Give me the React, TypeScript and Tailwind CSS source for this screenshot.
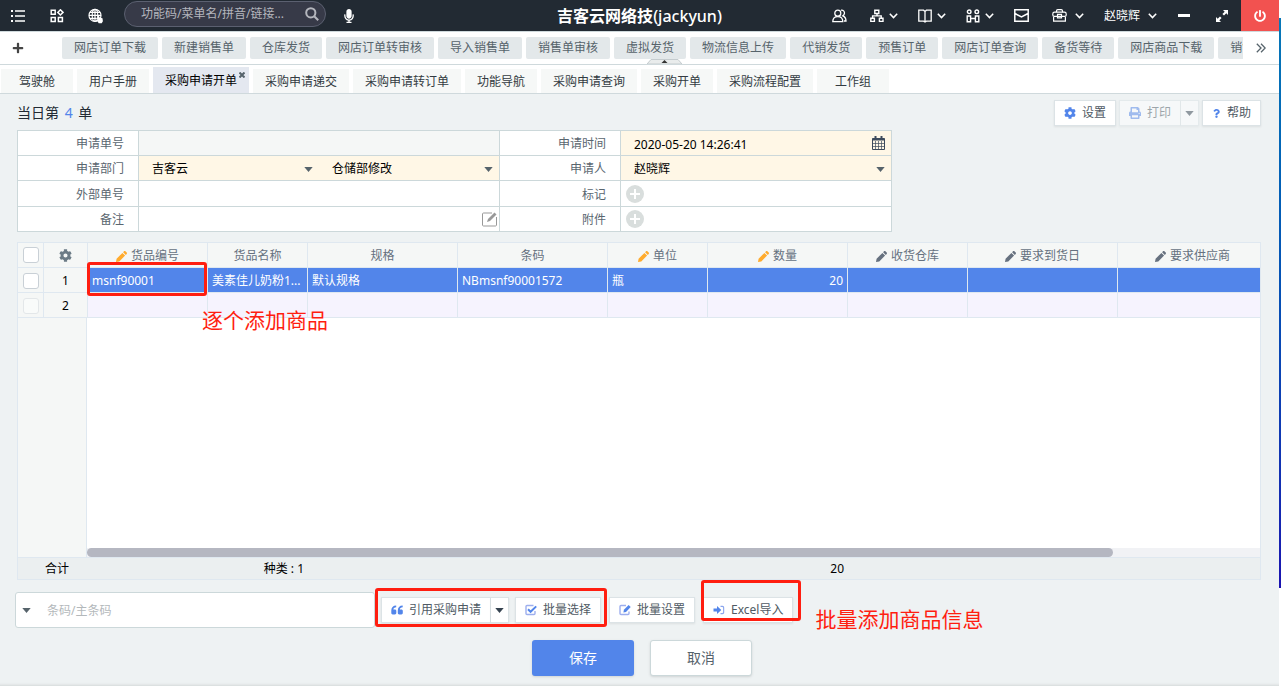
import React, { useState } from 'react';
import { FaCog, FaPlus, FaPrint, FaQuestion, FaPowerOff, FaMicrophone } from 'react-icons/fa';

type IconProps = { className?: string };

const Chevron = () => (
  <svg className="w-[9px] h-[6px]" viewBox="0 0 9 6" fill="none" stroke="currentColor" strokeWidth={1.5}>
    <path d="M0.8 0.8L4.5 4.6L8.2 0.8" />
  </svg>
);

const Caret = ({ className = '' }: IconProps) => (
  <svg className={`w-[9px] h-[5px] ${className}`} viewBox="0 0 9 5" fill="currentColor">
    <path d="M0.3 0H8.7L4.5 5z" />
  </svg>
);

const PencilIcon = ({ className = '' }: IconProps) => (
  <svg className={`w-[11px] h-[11px] ${className}`} viewBox="0 0 11 11" fill="currentColor">
    <path d="M0 11l.6-3.300L6.400 1.900l2.700 2.700-5.800 5.800zM7.100 1.200L8 .3c.4-.4 1-.4 1.400 0l1.300 1.300c.4.4.4 1 0 1.400l-.9.900z" />
  </svg>
);

const ListIcon = () => (
  <svg className="w-4 h-4" viewBox="0 0 16 16" fill="currentColor">
    <path d="M1 2h2v2H1zM1 7h2v2H1zM1 12h2v2H1zM5 2.2h10v1.5H5zM5 7.2h10v1.5H5zM5 12.2h10v1.5H5z" />
  </svg>
);

const AppsIcon = () => (
  <svg className="w-[14px] h-[14px]" viewBox="0 0 14 14" fill="none" stroke="currentColor" strokeWidth={1.5}>
    <path d="M1.2 1.2h4v4h-4zM1.2 8.4h4v4h-4zM8.4 8.4h4v4h-4zM10.4 0.8l2.6 2.6-2.6 2.6-2.6-2.6z" />
  </svg>
);

const GlobeIcon = () => (
  <svg className="w-4 h-4" viewBox="0 0 16 16" fill="none" stroke="currentColor" strokeWidth={1.2}>
    <circle cx="7" cy="7.4" r="6" />
    <ellipse cx="7" cy="7.4" rx="2.8" ry="6" />
    <path d="M7 1.4v12M1 7.4h12M1.8 4.4h10.4M1.8 10.4h7" />
    <path d="M9.5 8l1.2-.6 1 2 2.8.8.4 3-1.2 2h-3l-2-3.2 1.4-.4z" fill="currentColor" stroke="none" />
  </svg>
);

const SearchIcon = () => (
  <svg className="w-[14px] h-[14px]" viewBox="0 0 14 14" fill="none" stroke="currentColor" strokeWidth={2}>
    <circle cx="5.8" cy="5.8" r="4.6" />
    <path d="M9.2 9.2l4 4" />
  </svg>
);

const UsersIcon = () => (
  <svg className="w-[15px] h-[14px]" viewBox="0 0 15 14" fill="none" stroke="currentColor" strokeWidth={1.3}>
    <circle cx="5.8" cy="4.2" r="3" />
    <path d="M0.8 12.6c0-3 2-5 5-5s5 2 5 5zM9 1.2c2.6-.2 3.8 1.6 3.4 3.4-.2 1-.9 1.7-1.6 2.2 2 .7 3.2 2.6 3.2 5.2h-2" />
  </svg>
);

const OrgIcon = () => (
  <svg className="w-[14px] h-[14px]" viewBox="0 0 14 14" fill="none" stroke="currentColor" strokeWidth={1.4}>
    <path d="M4.8 1.3h4v3.2h-4zM0.8 9.2h3.6v3.2H0.8zM9.4 9.2H13v3.2H9.4zM7 4.5v2.4M2.6 9.2V6.9h8.6v2.3" />
  </svg>
);

const BookIcon = () => (
  <svg className="w-[14px] h-[14px]" viewBox="0 0 14 14" fill="none" stroke="currentColor" strokeWidth={1.3}>
    <path d="M7 2.4L5.600 1.200H0.800v11h4.800L7 13l1.400-.8h4.800v-11H8.400zM7 2.400V13" />
  </svg>
);

const TeamIcon = () => (
  <svg className="w-[14px] h-[14px]" viewBox="0 0 14 14" fill="none" stroke="currentColor" strokeWidth={1.4}>
    <circle cx="3.2" cy="2.8" r="1.8" />
    <circle cx="10.8" cy="2.8" r="1.8" />
    <path d="M1.200 12.800V7h3.400v5.800zM9.400 12.800V7h3.400v5.800zM4.600 9.500h4.800" />
  </svg>
);

const MailIcon = () => (
  <svg className="w-[15px] h-[13px]" viewBox="0 0 15 13" fill="none" stroke="currentColor" strokeWidth={1.5}>
    <path d="M0.8 0.8h13.4v11.400H0.8zM1 4.500l6.500 3.500L14 4.500" />
  </svg>
);

const BriefcaseIcon = () => (
  <svg className="w-[15px] h-[13px]" viewBox="0 0 15 13" fill="none" stroke="currentColor" strokeWidth={1.2}>
    <path d="M4.500 3.200V2c0-.8.500-1.300 1.300-1.300h3.400c.8 0 1.300.5 1.300 1.300v1.200" />
    <path d="M2.500 3.200h10c1 0 1.700.7 1.700 1.700v1c0 .8-.6 1.400-1.400 1.400H2.200C1.400 7.300.8 6.700.8 5.900v-1c0-1 .7-1.700 1.700-1.700zM1.600 7.300v4.900h11.800V7.300M5.500 5.300h4v3.500h-4z" />
  </svg>
);

const ExpandIcon = () => (
  <svg className="w-3 h-3" viewBox="0 0 12 12" fill="currentColor">
    <path d="M7 0h5v5l-1.700-1.700L8 5.600 6.400 4l2.300-2.300zM5 12H0V7l1.700 1.700L4 6.400 5.600 8l-2.300 2.300z" />
  </svg>
);

const QuoteIcon = () => (
  <svg className="w-3 h-3" viewBox="0 0 12 12" fill="#5285ea">
    <path d="M5.200 1.500C2 1.500.3 3.600.3 6.500V9c0 .8.600 1.400 1.400 1.400h2.200c.8 0 1.400-.6 1.400-1.400V7c0-.8-.6-1.400-1.400-1.400H2.400c0-1.400 1-2.300 2.800-2.300zM11.700 1.500c-3.200 0-4.900 2.100-4.900 5V9c0 .8.600 1.400 1.400 1.400h2.200c.8 0 1.400-.6 1.400-1.400V7c0-.8-.6-1.400-1.400-1.400H8.900c0-1.400 1-2.300 2.800-2.300z" />
  </svg>
);

const CheckIcon = () => (
  <svg className="w-3 h-3" viewBox="0 0 12 12" fill="none">
    <path d="M8.500 1.500h-6.500c-.6 0-1 .4-1 1v7c0 .6.400 1 1 1h7c.6 0 1-.4 1-1V7" stroke="#9daeee" strokeWidth={1.400} />
    <path d="M3 5.200l2.600 2.600L11.200 2.400" stroke="#5285ea" strokeWidth={2} />
  </svg>
);

const EditIcon = () => (
  <svg className="w-3 h-3" viewBox="0 0 12 12" fill="none">
    <path d="M7 1.500H2c-.6 0-1 .4-1 1v7c0 .6.400 1 1 1h7c.6 0 1-.4 1-1V7.500" stroke="#9daeee" strokeWidth={1.400} />
    <path d="M4.400 8.400l.5-2.600L9.600 1l2.100 2L7 7.900z" fill="#5285ea" />
  </svg>
);

const ImportIcon = () => (
  <svg className="w-3 h-3" viewBox="0 0 12 12" fill="#5285ea">
    <path d="M0.500 4.500h3.500V2L8.300 6 4 10V7.500H0.500z" />
    <path d="M7.500 1.800H9.500c1 0 1.700.7 1.700 1.700v5c0 1-.7 1.700-1.700 1.700H7.500V9.100h1.800c.5 0 .8-.3.8-.8V3.700c0-.5-.3-.8-.8-.8H7.500z" fill="#8aa5ee" />
  </svg>
);

const CalendarIcon = () => (
  <svg className="w-[13px] h-[14px]" viewBox="0 0 13 14" fill="none" stroke="currentColor">
    <path d="M0.500 2.500h12v11H0.500z" />
    <path d="M3.500 5v8.500M6.500 5v8.500M9.500 5v8.500M0.500 7.500h12M0.500 10.500h12" strokeWidth={0.700} />
    <path d="M0.500 3.500h12" strokeWidth={2} />
    <path d="M3.500 0v4M9.500 0v4" strokeWidth={2} />
  </svg>
);

const NoteIcon = () => (
  <svg className="w-[15px] h-[15px]" viewBox="0 0 15 15" fill="none" stroke="#999">
    <path d="M10 1H1.500c-.6 0-1 .4-1 1v11c0 .6.400 1 1 1h12c.6 0 1-.4 1-1V5" />
    <path d="M5 10l1-3L12.500.5l2 2L8 9z" fill="#999" stroke="none" />
  </svg>
);

const AddIcon = () => (
  <svg className="w-[18px] h-[18px]" viewBox="0 0 18 18">
    <circle cx="9" cy="9" r="9" fill="#d9dedd" />
    <path d="M9 4v10M4 9h10" stroke="#fff" strokeWidth={2} />
  </svg>
);

const shortcuts = [
  '网店订单下载', '新建销售单', '仓库发货', '网店订单转审核', '导入销售单', '销售单审核', '虚拟发货',
  '物流信息上传', '代销发货', '预售订单', '网店订单查询', '备货等待', '网店商品下载', '销售',
];

const tabs = [
  '驾驶舱', '用户手册', '采购申请开单', '采购申请递交', '采购申请转订单', '功能导航', '采购申请查询',
  '采购开单', '采购流程配置', '工作组',
];

const columns = [
  { title: '货品编号', pencil: 'text-[#ffab2d]' },
  { title: '货品名称' },
  { title: '规格' },
  { title: '条码' },
  { title: '单位', pencil: 'text-[#ffab2d]' },
  { title: '数量', pencil: 'text-[#ffab2d]' },
  { title: '收货仓库', pencil: 'text-[#66717f]' },
  { title: '要求到货日', pencil: 'text-[#66717f]' },
  { title: '要求供应商', pencil: 'text-[#66717f]' },
];

const navMenus = [
  { label: '组织', icon: <OrgIcon /> },
  { label: '手册', icon: <BookIcon /> },
  { label: '团队', icon: <TeamIcon /> },
];

const Columns = () => (
  <colgroup>
    <col className="w-[26px]" />
    <col className="w-[44px]" />
    <col className="w-[120px]" />
    <col className="w-[100px]" />
    <col className="w-[150px]" />
    <col className="w-[150px]" />
    <col className="w-[100px]" />
    <col className="w-[140px]" />
    <col className="w-[120px]" />
    <col className="w-[150px]" />
    <col className="w-[150px]" />
  </colgroup>
);

const btn = 'h-[26px] px-[9px] flex items-center gap-1.5 bg-white border border-[#dce3e6] shadow-[0_1px_2px_rgba(0,0,0,0.08)] text-[#4f5a64] whitespace-nowrap';
const splitBtn = 'h-[26px] w-[18px] flex items-center justify-center bg-white border border-l-0 border-[#dce3e6] shadow-[0_1px_2px_rgba(0,0,0,0.08)] text-[#35424f]';
const label = 'flex items-center justify-end pr-3.5 pt-0.5 bg-white border-r border-b border-[#ccd8da] text-[#5a666f]';
const cell = 'relative flex items-center border-r border-b border-[#ccd8da]';
const field = 'w-full h-full appearance-none bg-transparent pl-[13px] pt-0.5 text-black outline-none';
const checkbox = 'block mx-auto w-4 h-4 appearance-none rounded-[3px] border border-[#c9d0d6] bg-white disabled:border-[#e3e7e9] disabled:bg-[#f9fbfa]';
const td = 'border-r border-b border-[#dfe8f0] pt-0.5 pb-0 px-1';
const mark = 'absolute z-10 border-[3px] border-[#ff1e10] rounded-[3px] pointer-events-none';
const note = 'absolute z-10 text-[21px] leading-6 text-[#ff1e10] whitespace-nowrap';

const SelectField = ({ id, name, value }: { id: string; name: string; value: string }) => (
  <div className="relative flex-1 h-full">
    <select id={id} aria-label={name} className={field}>
      <option>{value}</option>
    </select>
    <Caret className="absolute right-1.5 top-[11px] text-[#56636b] pointer-events-none" />
  </div>
);

const TopBar = () => (
  <header className="h-[31px] flex items-center bg-[#222a33] text-white">
    <div className="flex-1 flex items-center">
      <button aria-label="菜单" className="ml-[10px]"><ListIcon /></button>
      <button aria-label="应用" className="ml-6"><AppsIcon /></button>
      <button aria-label="语言" className="ml-6"><GlobeIcon /></button>
      <div className="ml-5 w-[202px] h-[26px] -mt-[3px] flex items-center pl-4 pr-1.5 rounded-full bg-[#373a48] border border-[#5b6070] text-[#b4b6bd]">
        <input aria-label="搜索" placeholder="功能码/菜单名/拼音/链接..." className="flex-1 min-w-0 bg-transparent outline-none placeholder:text-[#b4b6bd]" />
        <button aria-label="查找"><SearchIcon /></button>
      </div>
      <button aria-label="语音" className="ml-4"><FaMicrophone size={14} /></button>
    </div>
    <h1 className="text-base leading-6 font-bold">吉客云网络技<span className="font-medium">(jackyun)</span></h1>
    <div className="flex-1 h-full flex items-center justify-end">
      <div className="flex items-center gap-5 pr-2">
        <button aria-label="用户" className="w-[18px]"><UsersIcon /></button>
        {navMenus.map(m => (
          <button key={m.label} aria-label={m.label} className="flex items-center gap-[5px]">
            {m.icon}
            <Chevron />
          </button>
        ))}
        <button aria-label="邮件" className="w-[18px]"><MailIcon /></button>
        <button aria-label="工具" className="flex items-center gap-2">
          <BriefcaseIcon />
          <Chevron />
        </button>
        <button className="flex items-center gap-2">赵晓辉 <Chevron /></button>
      </div>
      <button aria-label="最小化" className="w-[38px] flex justify-center"><span className="w-3 h-[3px] bg-white" /></button>
      <button aria-label="全屏" className="w-[38px] flex justify-center"><ExpandIcon /></button>
      <button aria-label="退出" className="w-[38px] h-full flex items-center justify-center bg-[#f25250]"><FaPowerOff size={12} /></button>
    </div>
  </header>
);

const ShortcutBar = () => (
  <nav className="relative h-[34px] flex items-center bg-white border-y border-[#cfd9dc] text-[#56636b]">
    <button aria-label="添加" className="w-[62px] pl-3 shrink-0"><FaPlus size={12} className="text-[#444]" /></button>
    <div className="flex-1 min-w-0 flex gap-1 overflow-hidden">
      {shortcuts.map(s => (
        <button key={s} className="h-[22px] px-3 shrink-0 rounded-[2px] bg-[#e3e8ea]">{s}</button>
      ))}
    </div>
    <button aria-label="更多" className="w-9 shrink-0 flex justify-center">
      <svg className="w-[10px] h-[10px]" viewBox="0 0 10 10" fill="none" stroke="currentColor" strokeWidth={1.300}>
        <path d="M0.800 0.800L5 5L0.800 9.200M5 0.800L9.200 5L5 9.200" />
      </svg>
    </button>
    <svg className="absolute left-[647px] bottom-0 w-[35px] h-[5px]" viewBox="0 0 35 5">
      <path d="M0 5L4 0.500H31L35 5z" fill="#e9ecec" stroke="#c5cccf" />
      <path d="M14.500 4L17.500 1L20.500 4z" fill="#333" />
    </svg>
  </nav>
);

const ItemTable = () => (
  <div className="relative flex-1 flex flex-col border border-[#dfe8f0] bg-white overflow-hidden text-black">
    <table className="w-[1250px] table-fixed border-separate border-spacing-0">
      <Columns />
      <thead>
        <tr className="h-[25px] bg-[#f5f7f6] text-[#66717f]">
          <th className="border-r border-b border-[#dfe8f0] p-0"><input type="checkbox" aria-label="全选" className={checkbox} /></th>
          <th className="border-r border-b border-[#dfe8f0] p-0"><FaCog size={13} className="mx-auto text-[#6b7b86]" /></th>
          {columns.map(c => (
            <th key={c.title} className={`${td} font-normal`}>
              <span className="flex items-center justify-center gap-1">
                {c.pencil && <PencilIcon className={c.pencil} />}
                {c.title}
              </span>
            </th>
          ))}
        </tr>
      </thead>
      <tbody>
        <tr className="h-[25px] bg-[#5285ea] text-white">
          <td className={`${td} bg-[#f5f7f6]`}><input type="checkbox" aria-label="选择第1行" className={checkbox} /></td>
          <td className={`${td} bg-[#f5f7f6] text-center text-black`}>1</td>
          <td className={`${td} relative`}>
            msnf90001
            <div className={`${mark} -left-px right-0 -top-1.5 -bottom-1`} />
            <div className={`${note} left-[114px] top-10`}>逐个添加商品</div>
          </td>
          <td className={`${td} truncate`}>美素佳儿奶粉1...</td>
          <td className={td}>默认规格</td>
          <td className={td}>NBmsnf90001572</td>
          <td className={td}>瓶</td>
          <td className={`${td} text-right`}>20</td>
          <td className={td} />
          <td className={td} />
          <td className={td} />
        </tr>
        <tr className="h-[25px] bg-[#f6f3fe]">
          <td className={`${td} bg-[#f5f7f6]`}><input type="checkbox" aria-label="选择第2行" disabled className={checkbox} /></td>
          <td className={`${td} bg-[#f5f7f6] text-center`}>2</td>
          {columns.map(c => <td key={c.title} className={td} />)}
        </tr>
      </tbody>
    </table>
    <div className="flex-1 flex">
      <div className="w-[69px] bg-[#f5f7f6] border-r border-[#dfe8f0]" />
      <div className="flex-1 flex flex-col justify-end">
        <div className="h-[9px] bg-[#f1f2f5]">
          <div className="w-[1026px] h-full rounded-full bg-[#b5b7c1]" />
        </div>
      </div>
    </div>
    <table className="w-[1250px] table-fixed border-separate border-spacing-0 bg-[#ebeff0]">
      <Columns />
      <tbody>
        <tr className="h-[22px]">
          <td colSpan={2} className="border-t border-[#dfe8f0] py-0 pr-0 pl-[27px]">合计</td>
          <td className="border-t border-[#dfe8f0]" />
          <td className="border-t border-[#dfe8f0] py-0 px-1 text-right">种类 : 1</td>
          <td colSpan={3} className="border-t border-[#dfe8f0]" />
          <td className="border-t border-[#dfe8f0] py-0 px-1 text-right">20</td>
          <td colSpan={3} className="border-t border-[#dfe8f0]" />
        </tr>
      </tbody>
    </table>
  </div>
);

const App: React.FC = () => {
  const [active, setActive] = useState('采购申请开单');

  return (
    <div className='min-h-screen flex bg-white text-xs font-["Noto_Sans","Noto_Sans_CJK_SC",sans-serif]'>
      <div className="flex-1 min-w-0 flex flex-col">
        <TopBar />
        <ShortcutBar />

        <nav className="h-[29px] flex items-end gap-1 pl-px bg-white border-b border-[#cfd9dc] text-[#333b42]">
          {tabs.map(t => (
            <div key={t} className={`relative ${t === active ? 'h-[26px] bg-[#e4e8f0] text-black' : 'h-6 bg-[#f6f8f7]'}`}>
              <button onClick={() => setActive(t)} className="h-full min-w-[72px] px-3 pt-0.5 whitespace-nowrap">{t}</button>
              {t === active && (
                <button aria-label="关闭" className="absolute right-1 top-[5px] text-[#56636b]">
                  <svg className="w-[6px] h-[6px]" viewBox="0 0 6 6" stroke="currentColor" strokeWidth={2}>
                    <path d="M0.500 0.500L5.500 5.500M5.500 0.500L0.500 5.500" />
                  </svg>
                </button>
              )}
            </div>
          ))}
        </nav>

        <main className="flex-1 flex flex-col pl-[17px] pr-[18px] pt-1.5 pb-[10px] bg-[#eef2f3] shadow-[inset_0_-4px_3px_-3px_#d3d7d7]">
          <div className="flex items-center justify-between mb-1">
            <p className="text-sm leading-5 text-[#222a33]">当日第 <span className="mx-0.5 text-[#5285ea]">4</span> 单</p>
            <div className="flex gap-[3px]">
              <button className={btn}><FaCog size={12} className="text-[#5285ea]" />设置</button>
              <div className="flex opacity-50">
                <button disabled className={`${btn} bg-[#f3f5f5]`}><FaPrint size={12} className="text-[#5285ea]" />打印</button>
                <button disabled aria-label="打印选项" className={`${splitBtn} bg-[#f3f5f5]`}><Caret /></button>
              </div>
              <button className={btn}><FaQuestion size={9} className="text-[#5285ea]" />帮助</button>
            </div>
          </div>

          <form className="w-fit grid grid-cols-[121px_361px_121px_271px] grid-rows-[25px_25px_26px_25px] border-l border-t border-[#ccd8da]">
            <label htmlFor="orderNo" className={label}>申请单号</label>
            <div className={`${cell} bg-[#f5f7f6]`}><input id="orderNo" readOnly className={field} /></div>
            <label htmlFor="time" className={label}>申请时间</label>
            <div className={`${cell} bg-[#fff7e6]`}>
              <input id="time" defaultValue="2020-05-20 14:26:41" className={field} />
              <button type="button" aria-label="选择日期" className="pr-1.5 text-[#3d4a5c]"><CalendarIcon /></button>
            </div>

            <label htmlFor="dept" className={label}>申请部门</label>
            <div className={`${cell} bg-[#fff7e6]`}>
              <SelectField id="dept" name="申请部门" value="吉客云" />
              <SelectField id="subDept" name="下级部门" value="仓储部修改" />
            </div>
            <label htmlFor="person" className={label}>申请人</label>
            <div className={`${cell} bg-[#fff7e6]`}><SelectField id="person" name="申请人" value="赵晓辉" /></div>

            <label htmlFor="outerNo" className={label}>外部单号</label>
            <div className={`${cell} bg-white`}><input id="outerNo" className={field} /></div>
            <label htmlFor="flag" className={label}>标记</label>
            <div className={`${cell} bg-white pl-[5px]`}><button id="flag" type="button"><AddIcon /></button></div>

            <label htmlFor="remark" className={label}>备注</label>
            <div className={`${cell} bg-white`}>
              <input id="remark" className={field} />
              <button type="button" aria-label="编辑备注" className="pr-[2px]"><NoteIcon /></button>
            </div>
            <label htmlFor="file" className={label}>附件</label>
            <div className={`${cell} bg-white pl-[5px]`}><button id="file" type="button"><AddIcon /></button></div>
          </form>

          <div className="flex-1 flex flex-col mt-[10px] mb-3">
            <ItemTable />
          </div>

          <div className="-ml-[2px] flex items-center gap-1.5">
            <div className="w-[360px] h-9 flex items-center bg-white border border-[#ccd8da] rounded-[3px]">
              <button aria-label="条码类型" className="w-5 flex justify-center text-[#56636b]"><Caret /></button>
              <input aria-label="条码" placeholder="条码/主条码" className="flex-1 h-full pl-[11px] outline-none placeholder:text-[#b3b8bb]" />
            </div>
            <div className="flex gap-2">
              <div className="relative flex gap-1.5">
                <div className="flex">
                  <button className={btn}><QuoteIcon />引用采购申请</button>
                  <button aria-label="引用选项" className={splitBtn}><Caret /></button>
                </div>
                <button className={btn}><CheckIcon />批量选择</button>
                <div className={`${mark} -left-1.5 -right-1.5 -top-[9px] -bottom-1`} />
              </div>
              <button className={btn}><EditIcon />批量设置</button>
              <div className="relative">
                <button className={btn}><ImportIcon />Excel导入</button>
                <div className={`${mark} -left-[2px] -right-2 -top-[17px] bottom-[2px]`} />
                <div className={`${note} left-full ml-[22px] top-[10px]`}>批量添加商品信息</div>
              </div>
            </div>
          </div>

          <div className="mt-3 pl-1.5 flex justify-center gap-4 text-sm">
            <button className="w-[102px] h-9 rounded-[3px] bg-[#5285ea] text-white shadow-sm">保存</button>
            <button className="w-[102px] h-9 rounded-[3px] bg-white border border-[#ccd8da] text-[#56636b] shadow-sm">取消</button>
          </div>
        </main>
      </div>
      <div className="w-[2px]">
        <div className="mt-[18px] h-[570px] bg-linear-to-b from-[#0878b8] to-[#1a12b0]" />
      </div>
    </div>
  );
};

export default App;
